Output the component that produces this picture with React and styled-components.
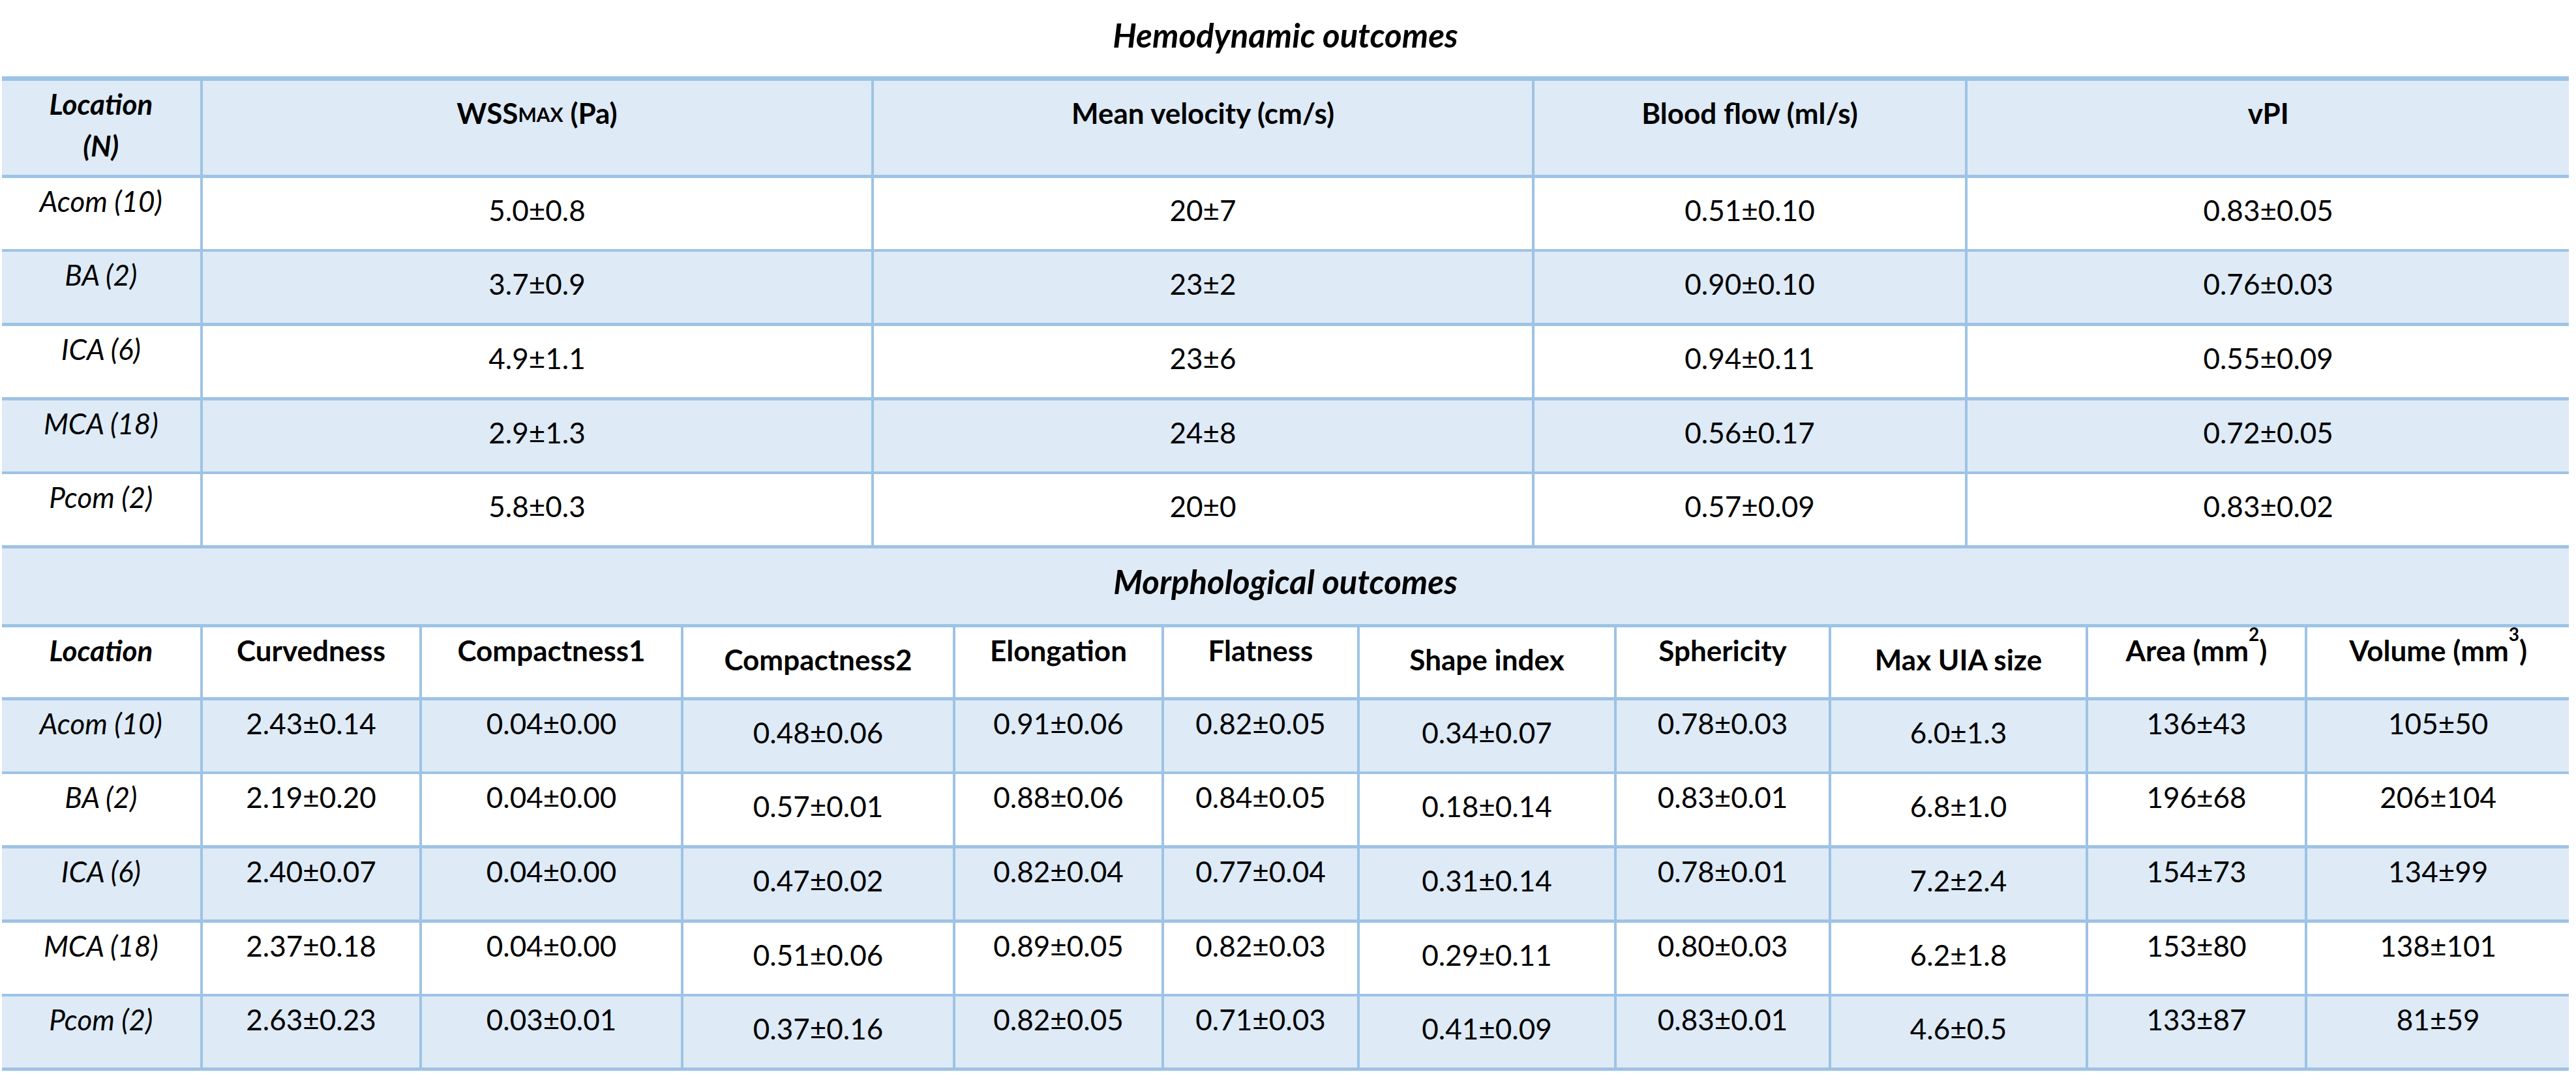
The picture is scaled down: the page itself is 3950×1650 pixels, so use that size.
import styled, { createGlobalStyle } from "styled-components";

// colours of the Word table
const LINE = "#9dc3e6";
const SHADE = "#deeaf6";
const RULE = 4.7;

const GlobalStyle = createGlobalStyle`
  html, body {
    margin: 0;
    padding: 0;
    background: #ffffff;
  }
  body {
    font-family: Lato, "Open Sans", sans-serif;
    color: #000000;
  }
`;

const Page = styled.div`
  width: 3950px;
  height: 1650px;
  box-sizing: border-box;
  padding-left: 3px;
  background: #ffffff;
`;

const Wrap = styled.div`
  width: 3936px;
`;

const Caption = styled.div`
  height: 117px;
  box-sizing: border-box;
  padding-top: 22px;
  text-align: center;
  font-family: Lato, sans-serif;
  font-style: italic;
  font-weight: 700;
  font-size: 51px;
  line-height: 64px;
`;

const Sheet = styled.div`
  display: flex;
  flex-direction: column;
  gap: ${RULE}px;
  padding: 7px 0 ${RULE}px;
  background: ${LINE};
`;

const Grid = styled.div`
  display: grid;
  grid-template-columns: ${(p) => p.$cols};
  grid-template-rows: ${(p) => p.$head}px repeat(5, 109px);
  gap: ${RULE}px;
`;

const Banner = styled.div`
  height: 116px;
  box-sizing: border-box;
  padding-top: 19px;
  background: ${SHADE};
  text-align: center;
  font-style: italic;
  font-weight: 700;
  font-size: 51px;
  line-height: 64px;
`;

const Cell = styled.div`
  box-sizing: border-box;
  padding-top: ${(p) => (p.$low ? 17 : 3)}px;
  background: ${(p) => (p.$shade ? SHADE : "#ffffff")};
  text-align: center;
  white-space: nowrap;
  font-size: 44px;
  line-height: 64px;
  font-weight: ${(p) => (p.$bold ? 700 : 400)};
  font-style: ${(p) => (p.$italic ? "italic" : "normal")};
`;

const Tiny = styled.span`
  font-size: 30px;
  vertical-align: 3px;
`;

const Sup = styled.sup`
  font-size: 28px;
  line-height: 0;
  vertical-align: 31px;
`;

const hemoCols = "303.65fr 1024.3fr 1008.3fr 659.3fr 921.65fr";
const morphCols =
  "303.65fr 331.3fr 396.3fr 412.3fr 315.3fr 295.3fr 389.3fr 324.3fr 389.3fr 331.3fr 400.65fr";

const hemoHead = [
  <>
    Location
    <br />
    (N)
  </>,
  <>
    WSS<Tiny>MAX</Tiny> (Pa)
  </>,
  "Mean velocity (cm/s)",
  "Blood flow (ml/s)",
  "vPI",
];

const hemoRows = [
  ["Acom (10)", "5.0±0.8", "20±7", "0.51±0.10", "0.83±0.05"],
  ["BA (2)", "3.7±0.9", "23±2", "0.90±0.10", "0.76±0.03"],
  ["ICA (6)", "4.9±1.1", "23±6", "0.94±0.11", "0.55±0.09"],
  ["MCA (18)", "2.9±1.3", "24±8", "0.56±0.17", "0.72±0.05"],
  ["Pcom (2)", "5.8±0.3", "20±0", "0.57±0.09", "0.83±0.02"],
];

const morphHead = [
  "Location",
  "Curvedness",
  "Compactness1",
  "Compactness2",
  "Elongation",
  "Flatness",
  "Shape index",
  "Sphericity",
  "Max UIA size",
  <>
    Area (mm<Sup>2</Sup>)
  </>,
  <>
    Volume (mm<Sup>3</Sup>)
  </>,
];

const morphRows = [
  ["Acom (10)", "2.43±0.14", "0.04±0.00", "0.48±0.06", "0.91±0.06", "0.82±0.05", "0.34±0.07", "0.78±0.03", "6.0±1.3", "136±43", "105±50"],
  ["BA (2)", "2.19±0.20", "0.04±0.00", "0.57±0.01", "0.88±0.06", "0.84±0.05", "0.18±0.14", "0.83±0.01", "6.8±1.0", "196±68", "206±104"],
  ["ICA (6)", "2.40±0.07", "0.04±0.00", "0.47±0.02", "0.82±0.04", "0.77±0.04", "0.31±0.14", "0.78±0.01", "7.2±2.4", "154±73", "134±99"],
  ["MCA (18)", "2.37±0.18", "0.04±0.00", "0.51±0.06", "0.89±0.05", "0.82±0.03", "0.29±0.11", "0.80±0.03", "6.2±1.8", "153±80", "138±101"],
  ["Pcom (2)", "2.63±0.23", "0.03±0.01", "0.37±0.16", "0.82±0.05", "0.71±0.03", "0.41±0.09", "0.83±0.01", "4.6±0.5", "133±87", "81±59"],
];

// columns whose paragraphs sit lower in the cell
const morphLow = [3, 6, 8];

const App = () => (
  <>
    <GlobalStyle />
    <Page>
      <Wrap>
        <Caption>Hemodynamic outcomes</Caption>
        <Sheet>
          <Grid $cols={hemoCols} $head={144}>
            {hemoHead.map((h, i) => (
              <Cell key={`h${i}`} $shade $bold $italic={i === 0} $low={i > 0}>
                {h}
              </Cell>
            ))}
            {hemoRows.map((row, r) =>
              row.map((v, i) => (
                <Cell key={`${r}-${i}`} $shade={r % 2 === 1} $italic={i === 0} $low={i > 0}>
                  {v}
                </Cell>
              ))
            )}
          </Grid>
          <Banner>Morphological outcomes</Banner>
          <Grid $cols={morphCols} $head={107}>
            {morphHead.map((h, i) => (
              <Cell key={`m${i}`} $bold $italic={i === 0} $low={morphLow.includes(i)}>
                {h}
              </Cell>
            ))}
            {morphRows.map((row, r) =>
              row.map((v, i) => (
                <Cell
                  key={`m${r}-${i}`}
                  $shade={r % 2 === 0}
                  $italic={i === 0}
                  $low={morphLow.includes(i)}
                >
                  {v}
                </Cell>
              ))
            )}
          </Grid>
        </Sheet>
      </Wrap>
    </Page>
  </>
);

export default App;
